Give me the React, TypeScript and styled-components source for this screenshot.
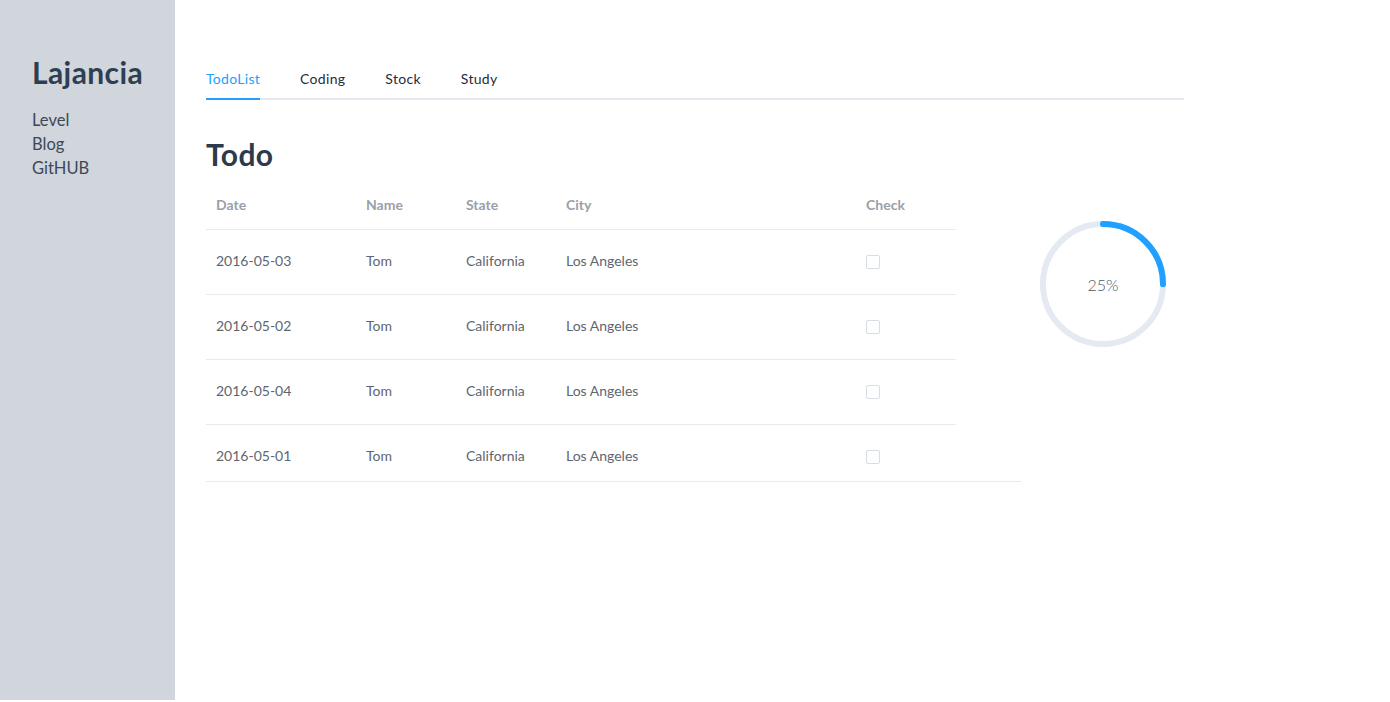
import React from "react";
import styled, { createGlobalStyle } from "styled-components";

const Global = createGlobalStyle`
  html, body { margin: 0; padding: 0; background: #fff; }
  body { font-family: Lato, "Open Sans", "Liberation Sans", sans-serif; }
  #root { height: 702px; }
`;

const Layout = styled.div`
  display: flex;
  height: 702px;
`;

const Sidebar = styled.aside`
  width: 175px;
  flex: none;
  height: 700px;
  background: #d1d5dc;
  padding: 54px 0 0 32px;
  box-sizing: border-box;
`;

const Brand = styled.h1`
  margin: 0 0 18px;
  font-size: 30px;
  line-height: 36px;
  font-weight: 700;
  color: #2f3f52;
  letter-spacing: 0.4px;
`;

const NavLink = styled.a`
  display: block;
  font-size: 16.5px;
  line-height: 24px;
  font-weight: 400;
  color: #3c4858;
  text-decoration: none;
`;

const Main = styled.main`
  flex: 1;
  padding: 60px 0 0 31px;
`;

const Tabs = styled.div`
  width: 978px;
  display: flex;
  gap: 40px;
  border-bottom: 2px solid #e4e7ed;
  height: 38px;
`;

const Tab = styled.div<{ $active?: boolean }>`
  font-size: 14px;
  letter-spacing: 0.3px;
  line-height: 38px;
  color: ${(p) => (p.$active ? "#20a0ff" : "#1f2d3d")};
  position: relative;
  &::after {
    content: "";
    display: ${(p) => (p.$active ? "block" : "none")};
    position: absolute;
    left: 0;
    right: 0;
    bottom: -2px;
    height: 2px;
    background: #20a0ff;
  }
`;

const Title = styled.h2`
  margin: 36px 0 9px;
  font-size: 30px;
  font-weight: 700;
  color: #2c3a4b;
  line-height: 36px;
  letter-spacing: 0.4px;
`;

const Content = styled.div`
  display: flex;
  align-items: flex-start;
`;

const Table = styled.div`
  width: 815px;
  height: 300px;
  overflow: hidden;
  border-bottom: 1px solid #e6ebf0;
`;

const Row = styled.div<{ $head?: boolean }>`
  display: grid;
  grid-template-columns: 150px 100px 100px 300px 100px;
  width: 750px;
  height: ${(p) => (p.$head ? "48px" : "64px")};
  box-sizing: content-box;
  align-items: center;
  border-bottom: 1px solid #e6ebf0;
`;

const Cell = styled.div<{ $head?: boolean }>`
  padding-left: 10px;
  margin-bottom: ${(p) => (p.$head ? "2px" : "4px")};
  font-size: 14px;
  font-weight: ${(p) => (p.$head ? 700 : 400)};
  color: ${(p) => (p.$head ? "#99a0a8" : "#5e6670")};
`;

const Checkbox = styled.span`
  display: inline-block;
  width: 12px;
  height: 12px;
  border: 1px solid #d8dde5;
  border-radius: 2px;
  background: #fff;
  vertical-align: middle;
`;

const ProgressWrap = styled.div`
  margin: 40px 0 0 19px;
  width: 126px;
  height: 126px;
  position: relative;
`;

const ProgressText = styled.div`
  position: absolute;
  inset: 0;
  display: flex;
  align-items: center;
  justify-content: center;
  font-size: 16px;
  font-weight: 300;
  color: #48576a;
`;

const rows = ["2016-05-03", "2016-05-02", "2016-05-04", "2016-05-01"];

export default function App() {
  const r = 60;
  const c = 2 * Math.PI * r;
  return (
    <>
      <Global />
      <Layout>
        <Sidebar>
          <Brand>Lajancia</Brand>
          <NavLink>Level</NavLink>
          <NavLink>Blog</NavLink>
          <NavLink>GitHUB</NavLink>
        </Sidebar>
        <Main>
          <Tabs>
            <Tab $active>TodoList</Tab>
            <Tab>Coding</Tab>
            <Tab>Stock</Tab>
            <Tab>Study</Tab>
          </Tabs>
          <Title>Todo</Title>
          <Content>
            <Table>
              <Row $head>
                <Cell $head>Date</Cell>
                <Cell $head>Name</Cell>
                <Cell $head>State</Cell>
                <Cell $head>City</Cell>
                <Cell $head>Check</Cell>
              </Row>
              {rows.map((date) => (
                <Row key={date}>
                  <Cell>{date}</Cell>
                  <Cell>Tom</Cell>
                  <Cell>California</Cell>
                  <Cell>Los Angeles</Cell>
                  <Cell>
                    <Checkbox />
                  </Cell>
                </Row>
              ))}
            </Table>
            <ProgressWrap>
              <svg width="126" height="126" viewBox="0 0 126 126">
                <circle cx="63" cy="63" r={r} fill="none" stroke="#e5e9f2" strokeWidth="6" />
                <circle
                  cx="63"
                  cy="63"
                  r={r}
                  fill="none"
                  stroke="#20a0ff"
                  strokeWidth="6"
                  strokeLinecap="round"
                  strokeDasharray={`${c * 0.25} ${c}`}
                  transform="rotate(-90 63 63)"
                />
              </svg>
              <ProgressText>25%</ProgressText>
            </ProgressWrap>
          </Content>
        </Main>
      </Layout>
    </>
  );
}
